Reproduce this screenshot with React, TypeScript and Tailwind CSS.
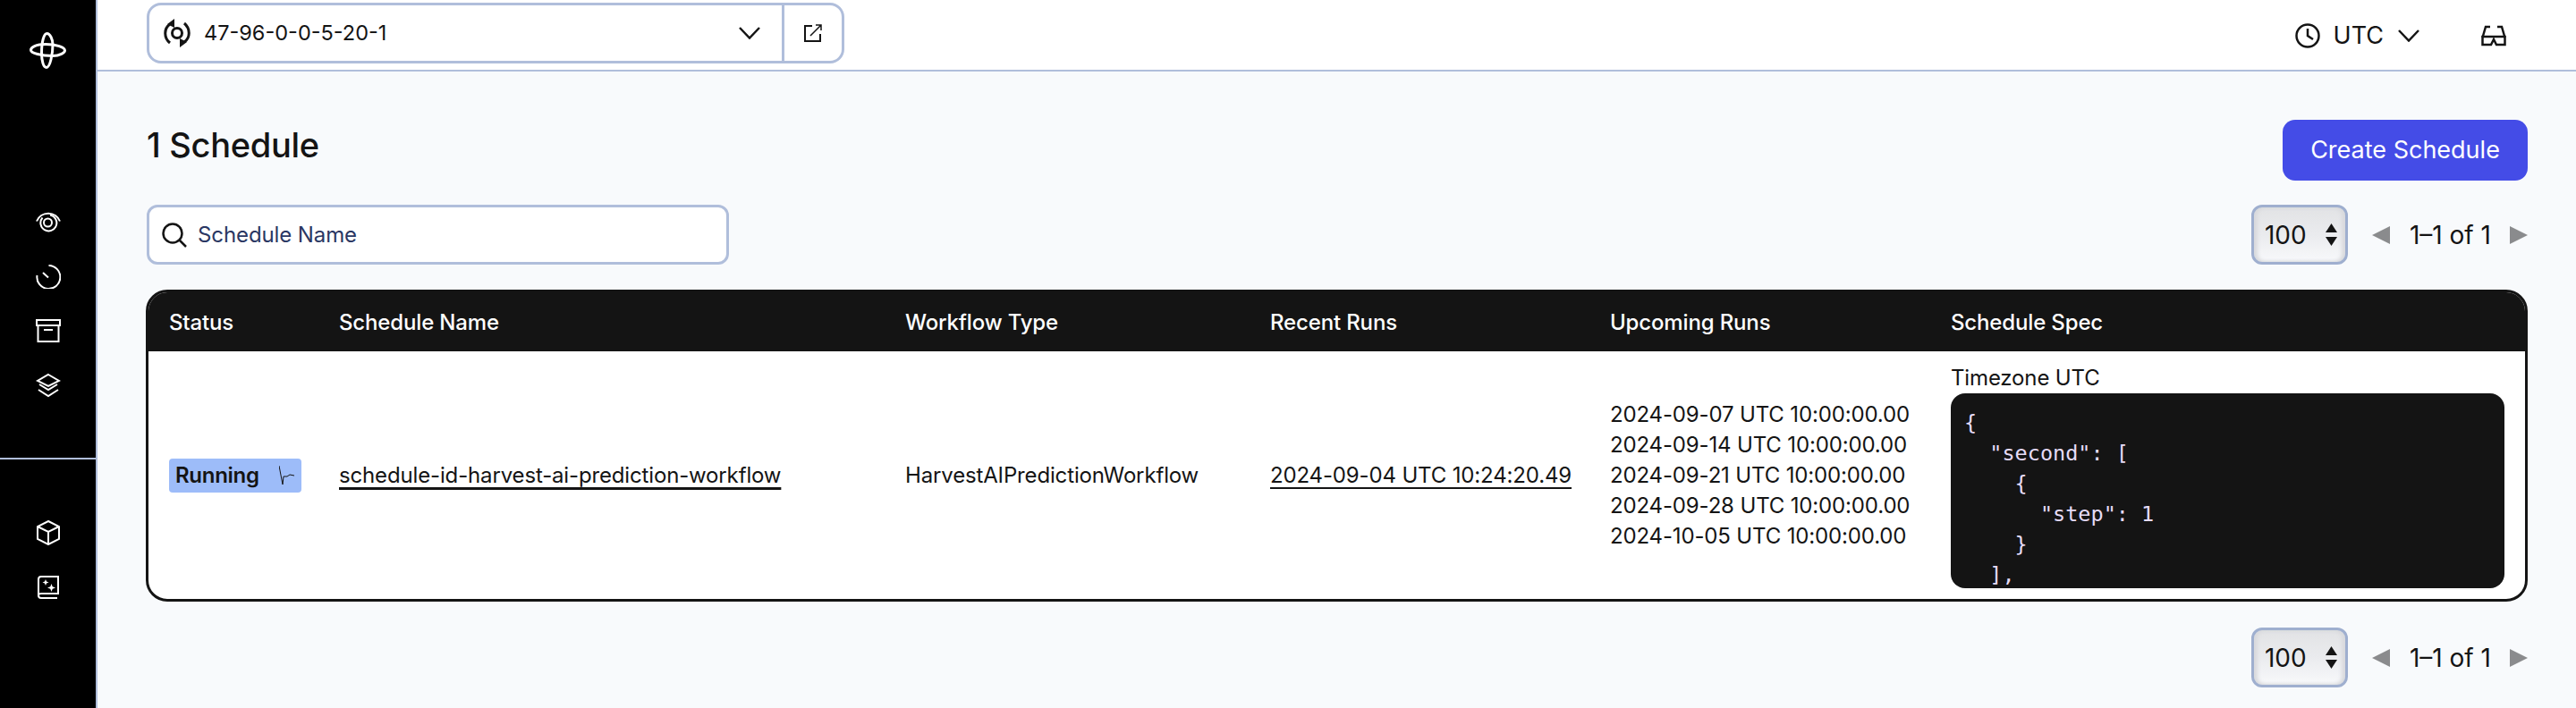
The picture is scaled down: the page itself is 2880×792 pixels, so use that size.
const lineBlue = "border-[#b0bedb]"

const upcomingRuns = [
  "2024-09-07 UTC 10:00:00.00",
  "2024-09-14 UTC 10:00:00.00",
  "2024-09-21 UTC 10:00:00.00",
  "2024-09-28 UTC 10:00:00.00",
  "2024-10-05 UTC 10:00:00.00",
]

const specJson = `{
  "second": [
    {
      "step": 1
    }
  ],
  "minute": [
    {
      "step": 1
    }
  ]
}`

function Logo() {
  return (
    <svg width="41" height="41" viewBox="0 0 41 41" fill="none" stroke="white" strokeWidth="3">
      <path d="M19.500 1.500C23 1.500 26 8 26 14C26 24 23 39.500 19 39.500C15.500 39.500 13.500 32 13.500 23C13.500 11 16 1.500 19.500 1.500Z" />
      <path d="M1.500 20C1.500 17 7 13.500 18 13.500C30 13.500 39.500 17 39.500 20.500C39.500 23 34 26.500 26 26.500C13 26.500 1.500 23.500 1.500 20Z" />
    </svg>
  )
}

function NavIcon({ children }: { children: React.ReactNode }) {
  return (
    <svg width="28" height="28" viewBox="0 0 28 28" fill="none" stroke="white" strokeWidth="2">
      {children}
    </svg>
  )
}

function Sidebar() {
  return (
    <aside className="w-[109px] h-full shrink-0 bg-black border-r-2 border-[#b0bedb] flex flex-col">
      <div className="flex justify-center mt-[36px]">
        <Logo />
      </div>
      <nav className="flex flex-col items-center gap-[33px] mt-[157px]">
        <NavIcon>
          <path d="M1 13.500A14 14 0 0 1 27 13.500" />
          <path d="M16 6.500A9 9 0 1 1 7.500 9.500" />
          <circle cx="13.500" cy="15" r="4.500" />
        </NavIcon>
        <NavIcon>
          <path d="M14.500 2A13 13 0 1 1 1.500 13" />
          <path d="M8 10L14 15.500" />
        </NavIcon>
        <NavIcon>
          <path d="M1 2H27V8H1Z" />
          <path d="M2.500 8V26H25.500V8" />
          <path d="M9 13H19" />
        </NavIcon>
        <NavIcon>
          <path d="M14 2L26 9L14 15L2 9Z" />
          <path d="M4 13L14 19L24 13" />
          <path d="M3 19L14 26L25 19" />
        </NavIcon>
      </nav>
      <div className="h-[2px] bg-[#b0bedb] mt-[67px]" />
      <nav className="flex flex-col items-center gap-[33px] mt-[68px]">
        <NavIcon>
          <path d="M14 1L26 7V21L14 27L2 21V7Z" />
          <path d="M2 7L14 13L26 7M14 13V27" />
        </NavIcon>
        <NavIcon>
          <path d="M3 24V5C3 3 4 2 6 2H25V21H6C3.500 21 3 22.500 3 23C3 25 4 26 6 26H24" />
          <path d="M11 5L12 7.500L14.500 8.500L12 9.500L11 12L10 9.500L7.500 8.500L10 7.500Z M17.500 10L18.700 13.300L22 14.500L18.700 15.700L17.500 19L16.300 15.700L13 14.500L16.300 13.300Z" fill="white" stroke="none" />
        </NavIcon>
      </nav>
    </aside>
  )
}

function Chevron({ className }: { className: string }) {
  return (
    <svg className={className} viewBox="0 0 24 14" fill="none" stroke="#141414" strokeWidth="2.500">
      <path d="M1 1L12 12.500L23 1" />
    </svg>
  )
}

function TopBar() {
  return (
    <header className={`h-[80px] shrink-0 bg-white border-b-2 ${lineBlue} pt-[3px] pl-[55px] pr-[78px] flex justify-between`}>
      <div className={`w-[780px] h-[68px] border-[3px] ${lineBlue} rounded-[16px] flex bg-white`}>
        <div className="flex-1 flex items-center pl-[14px] pr-[24px]">
          <svg width="34" height="34" viewBox="0 0 34 34" fill="none" stroke="#141414" strokeWidth="3">
            <circle cx="17" cy="17" r="5.500" />
            <path d="M9 28C2 22 2 12 9 7" />
            <path d="M25 6C32 12 32 22 25 27" />
            <path d="M14 1L14 11L6 7Z M20 33L20 23L28 27Z" fill="#141414" stroke="none" />
          </svg>
          <span className="ml-[13px] text-[23.5px] text-[#141414]">47-96-0-0-5-20-1</span>
          <Chevron className="ml-auto w-[24px] h-[14px]" />
        </div>
        <div className={`w-[67px] border-l-[3px] ${lineBlue} flex items-center justify-center`}>
          <svg width="22" height="22" viewBox="0 0 22 22" fill="none" stroke="#141414" strokeWidth="2">
            <path d="M10 3H2V20H19V12" />
            <path d="M8 14L20 2M14 2H20V8" strokeWidth="1.500" />
          </svg>
        </div>
      </div>
      <div className="flex items-center h-[74px]">
        <svg width="28" height="28" viewBox="0 0 28 28" fill="none" stroke="#141414" strokeWidth="2.500">
          <circle cx="14" cy="14" r="12.500" />
          <path d="M14 6V14L20 18" />
        </svg>
        <span className="ml-[15px] text-[27px] text-[#141414]">UTC</span>
        <Chevron className="ml-[16px] w-[24px] h-[14px]" />
        <svg className="ml-[69px]" width="28" height="24" viewBox="0 0 28 24" fill="none" stroke="#141414" strokeWidth="2.500">
          <path d="M1.500 14L5 2H10M26.500 14L23 2H18" />
          <path d="M1.500 13H26.500V22H17L14 16L11 22H1.500Z" />
        </svg>
      </div>
    </header>
  )
}

function Pager() {
  return (
    <div className="flex items-center h-[67px]">
      <div className="w-[108px] h-[67px] border-[3px] border-[#9fafcf] rounded-[12px] bg-gradient-to-b from-[#e2e3e5] via-[#eaebee] to-[#f8f9fb] shadow-[inset_4px_0_4px_#d8d9dc,inset_-4px_0_4px_#d8d9dc] flex items-center justify-between pl-[12px] pr-[9px]">
        <span className="text-[28px] text-[#141414]">100</span>
        <svg width="13" height="25" viewBox="0 0 13 25" fill="#141414">
          <path d="M6.500 0L13 10H0Z" />
          <path d="M6.500 25L13 15H0Z" />
        </svg>
      </div>
      <svg className="ml-[27px]" width="20" height="20" viewBox="0 0 20 20" fill="#8a8b8d">
        <path d="M0 10L20 0V20Z" />
      </svg>
      <span className="ml-[22px] mr-[1px] text-[28px] text-[#141414]">1–1 of 1</span>
      <svg className="ml-[20px]" width="20" height="20" viewBox="0 0 20 20" fill="#8a8b8d">
        <path d="M20 10L0 0V20Z" />
      </svg>
    </div>
  )
}

function SchedulesTable() {
  const th = "text-left font-medium text-[24px] text-white p-0 pt-[2px]"
  return (
    <div className="h-[349px] -ml-[1px] shrink-0 rounded-[24px] border-[3px] border-[#141414] bg-white overflow-hidden">
      <table className="w-full table-fixed border-collapse text-[24px] tracking-[-0.15px] text-[#141414]">
        <colgroup>
          <col className="w-[213px]" />
          <col className="w-[633px]" />
          <col className="w-[408px]" />
          <col className="w-[380px]" />
          <col className="w-[381px]" />
          <col />
        </colgroup>
        <thead>
          <tr className="h-[66px] bg-[#141414]">
            <th className={`${th} pl-[23px]`}>Status</th>
            <th className={th}>Schedule Name</th>
            <th className={th}>Workflow Type</th>
            <th className={th}>Recent Runs</th>
            <th className={th}>Upcoming Runs</th>
            <th className={th}>Schedule Spec</th>
          </tr>
        </thead>
        <tbody>
          <tr className="h-[277px]">
            <td className="p-0 pl-[23px]">
              <span className="w-[148px] h-[38px] rounded-[4px] bg-[#9dbcf9] flex items-center justify-between pl-[7px] pr-[7px]">
                <span className="font-semibold text-[24px] tracking-[-0.3px]">Running</span>
                <svg width="18" height="24" viewBox="0 0 18 24" fill="none" stroke="#141414" strokeWidth="1">
                  <path d="M0 1L4 22L5 13H9L12 11L17 12" />
                </svg>
              </span>
            </td>
            <td className="p-0">
              <a className="underline decoration-[3px] underline-offset-[5px]">schedule-id-harvest-ai-prediction-workflow</a>
            </td>
            <td className="p-0">HarvestAIPredictionWorkflow</td>
            <td className="p-0">
              <a className="underline decoration-[2px] underline-offset-[5px]">2024-09-04 UTC 10:24:20.49</a>
            </td>
            <td className="p-0 leading-[34px]">
              {upcomingRuns.map((run) => (
                <div key={run}>{run}</div>
              ))}
            </td>
            <td className="p-0 pt-[13px] pr-[23px] align-top">
              <div className="leading-[34px]">Timezone UTC</div>
              <pre className="h-[218px] overflow-hidden rounded-[16px] bg-[#141414] px-[15px] pt-[16px] font-['DejaVu_Sans_Mono',monospace] text-[23.5px] tracking-normal leading-[34px] text-[#e6dcf7]">{specJson}</pre>
            </td>
          </tr>
        </tbody>
      </table>
    </div>
  )
}

export default function App() {
  return (
    <div className="flex h-[792px] overflow-hidden font-['Inter',sans-serif] bg-[#f8fafc]">
      <Sidebar />
      <div className="flex-1 min-w-0 flex flex-col">
        <TopBar />
        <main className="flex-1 flex flex-col pt-[54px] pl-[55px] pr-[54px]">
          <div className="flex items-start justify-between h-[68px]">
            <h1 className="text-[38px] leading-[56px] font-medium tracking-[-0.3px] text-[#141414]">1 Schedule</h1>
            <button className="w-[274px] h-[68px] rounded-[14px] bg-[#444ce7] text-white text-[27px]">Create Schedule</button>
          </div>
          <div className="flex items-center justify-between mt-[27px]">
            <div className={`w-[651px] h-[67px] border-[3px] ${lineBlue} rounded-[12px] bg-white flex items-center pl-[14px]`}>
              <svg width="28" height="28" viewBox="0 0 28 28" fill="none" stroke="#141414" strokeWidth="2.500">
                <circle cx="12" cy="12" r="10.500" />
                <path d="M19.500 19.500L27 27" />
              </svg>
              <span className="ml-[12px] text-[24px] tracking-[-0.1px] text-[#2a3763]">Schedule Name</span>
            </div>
            <Pager />
          </div>
          <div className="mt-[28px]">
            <SchedulesTable />
          </div>
          <div className="flex justify-end mt-[29px]">
            <Pager />
          </div>
        </main>
      </div>
    </div>
  )
}
